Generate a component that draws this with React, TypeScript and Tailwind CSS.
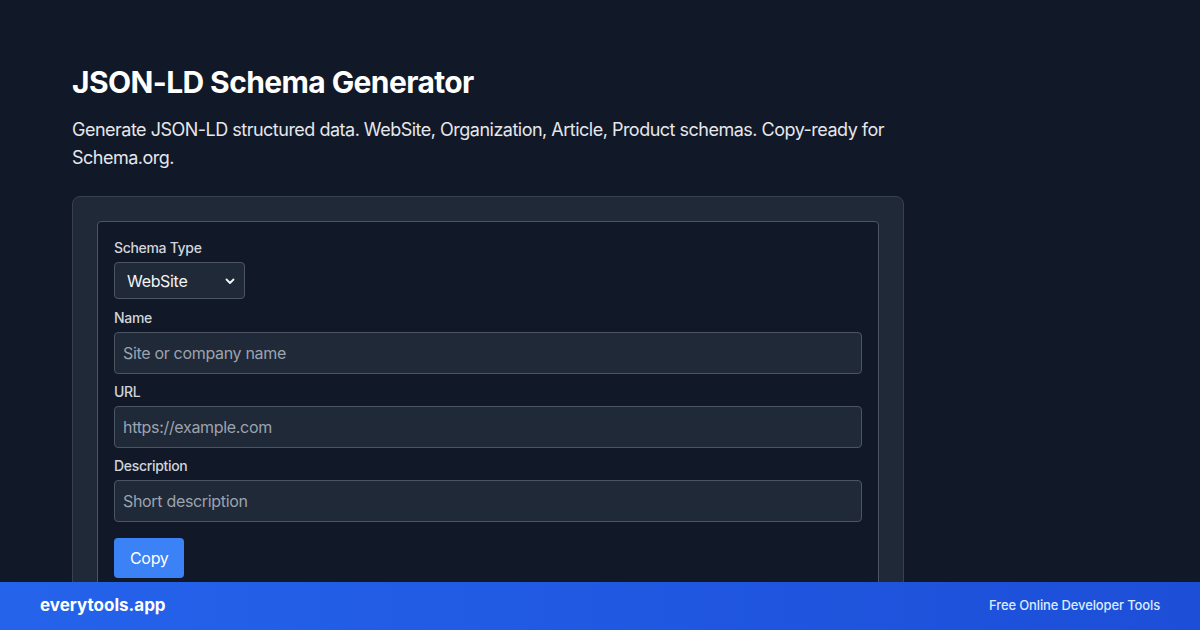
import React from "react";

function Field({ label, placeholder }: { label: string; placeholder: string }) {
  return (
    <div className="mb-2">
      <label className="block text-sm font-medium leading-5 text-[#d1d5db] mb-1">{label}</label>
      <input
        className="block w-full h-[42px] px-2 text-base bg-[#1f2937] border border-[#4b5563] rounded text-[#f3f4f6] placeholder:text-[#9ca3af] outline-none tracking-[-0.02em]"
        placeholder={placeholder}
      />
    </div>
  );
}

export default function App() {
  return (
    <div
      className="min-h-[630px] bg-[#111827] text-white tracking-[-0.02em]"
      style={{ fontFamily: "Inter, 'Noto Sans', sans-serif" }}
    >
      <div className="px-[72px] pt-16 pb-10">
        <div className="w-[832px]">
          <h1 className="text-3xl leading-9 font-bold mb-4 text-white tracking-[-0.02em]">JSON-LD Schema Generator</h1>
          <p className="text-lg leading-7 text-[#e5e7eb] mb-6 tracking-[-0.028em]">
            Generate JSON-LD structured data. WebSite, Organization, Article, Product schemas. Copy-ready for Schema.org.
          </p>
          <div className="bg-[#1f2937] border border-[#374151] rounded-lg p-6">
            <div className="bg-[#111827] border border-[#4b5563] rounded p-4">
              <div className="mb-[9px]">
                <label className="block text-sm font-medium leading-5 text-[#d1d5db] mb-1">Schema Type</label>
                <div className="w-[131px] h-[37px] flex items-center justify-between pl-3 pr-2 bg-[#1f2937] border border-[#4b5563] rounded text-base text-[#f3f4f6]">
                  <span>WebSite</span>
                  <svg width="12" height="12" viewBox="0 0 12 12" fill="none">
                    <path d="M2.5 4.5L6 8l3.5-3.5" stroke="#f3f4f6" strokeWidth="1.8" strokeLinecap="round" strokeLinejoin="round" />
                  </svg>
                </div>
              </div>
              <Field label="Name" placeholder="Site or company name" />
              <Field label="URL" placeholder="https://example.com" />
              <Field label="Description" placeholder="Short description" />
              <button className="mt-2 px-4 h-10 bg-[#3b82f6] rounded text-base text-white tracking-[-0.02em]">Copy</button>
              <div className="h-16" />
            </div>
          </div>
        </div>
      </div>
      <div className="fixed bottom-0 left-0 right-0 h-12 px-10 flex items-center justify-between bg-gradient-to-r from-[#2563eb] to-[#1d4ed8] tracking-normal">
        <span className="text-[17px] font-bold text-white">everytools.app</span>
        <span className="text-[13px] font-medium text-[#dbeafe] tracking-[-0.01em]">Free Online Developer Tools</span>
      </div>
    </div>
  );
}
